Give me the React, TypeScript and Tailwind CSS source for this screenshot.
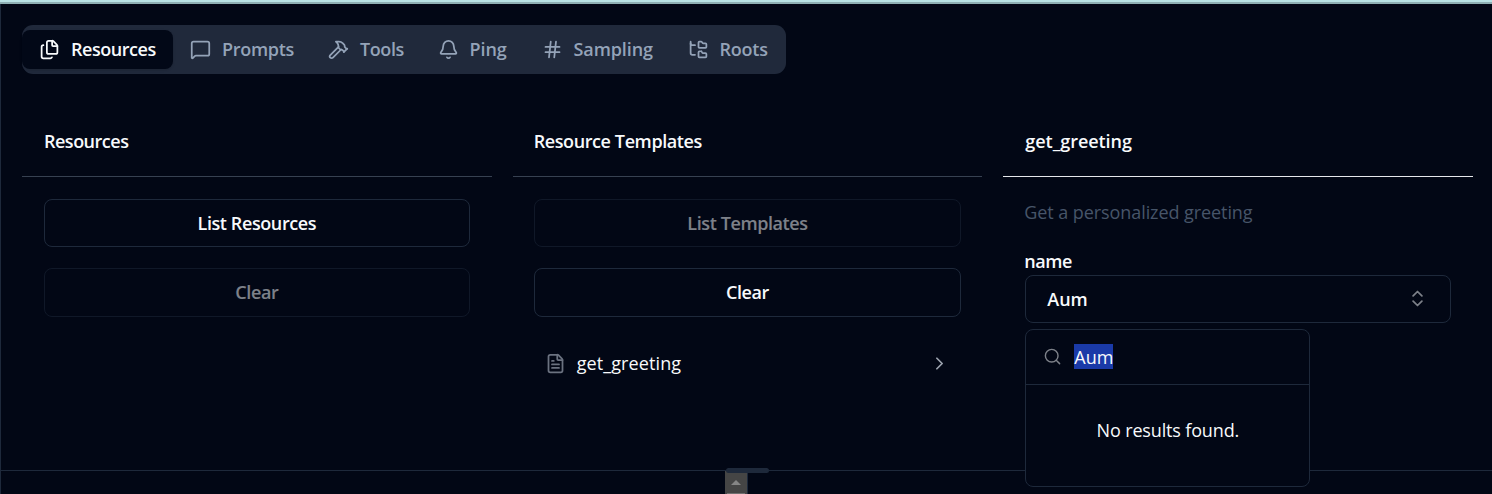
import type { ReactNode } from "react";
import {
  Bell,
  ChevronRight,
  ChevronsUpDown,
  FileText,
  Files,
  FolderTree,
  Hammer,
  Hash,
  MessageSquare,
  Search,
} from "lucide-react";

const tabs = [
  { label: "Resources", Icon: Files, box: "w-[151px] rounded-lg bg-[#020817] text-[#f8fafc] shadow-sm", text: "tracking-[-0.45px]" },
  { label: "Prompts", Icon: MessageSquare, box: "w-[138px]", text: "tracking-[-0.3px]" },
  { label: "Tools", Icon: Hammer, box: "w-[109.5px]", text: "tracking-[-0.4px]" },
  { label: "Ping", Icon: Bell, box: "w-[104px]", text: "tracking-[-0.05px]" },
  { label: "Sampling", Icon: Hash, box: "w-[146px]", text: "tracking-[-0.1px]" },
  { label: "Roots", Icon: FolderTree, box: "w-[115px]", text: "tracking-[-0.2px]" },
];

interface PanelProps {
  title: string;
  line: string;
  heading: string;
  body: string;
  children: ReactNode;
}

function Panel({ title, line, heading, body, children }: PanelProps) {
  return (
    <section className="min-w-0">
      <header className={`flex h-[72px] items-center border-b ${line} ${body}`}>
        <h3 className={`font-semibold ${heading}`}>{title}</h3>
      </header>
      <div className={`pt-[22px] ${body}`}>{children}</div>
    </section>
  );
}

function Button({ children, disabled, size = "h-12" }: { children: ReactNode; disabled?: boolean; size?: string }) {
  return (
    <button
      disabled={disabled}
      className={`flex w-full items-center justify-center rounded-lg border border-[#1e293b] font-semibold tracking-[-0.4px] disabled:opacity-50 ${size}`}
    >
      {children}
    </button>
  );
}

export default function App() {
  return (
    <div className="flex h-[494px] w-[1492px] flex-col overflow-hidden bg-[#020715] font-['Open_Sans','Noto_Sans',sans-serif] text-[18px] leading-6 text-[#f8fafc]">
      <div className="h-1 shrink-0 border-b-2 border-[#8eafb3] bg-[#b9e2e4]" />
      <div className="flex grow flex-col border-l border-[#1e293b]">
        <main className="h-[466px] shrink-0 pt-[21px] pr-[19px] pl-[21px]">
          <nav className="flex h-[49px] w-[764px] items-center rounded-[11px] bg-[#20293b] text-[#94a3b8]">
            {tabs.map(({ label, Icon, box, text }) => (
              <button key={label} className={`flex h-[39px] shrink-0 items-center pl-[17px] font-semibold ${box}`}>
                <Icon className="mr-[11px] size-[21px] shrink-0" />
                <span className={`-mt-0.5 ${text}`}>{label}</span>
              </button>
            ))}
          </nav>
          <div className="mt-[31px] grid grid-cols-3 gap-[21px]">
            <Panel title="Resources" line="border-[#374151]" heading="tracking-[-0.5px]" body="px-[22px]">
              <div className="flex flex-col gap-[21px]">
                <Button>List Resources</Button>
                <Button disabled size="h-[49px] pb-px">Clear</Button>
              </div>
            </Panel>
            <Panel title="Resource Templates" line="border-[#374151]" heading="tracking-[-0.4px]" body="px-[21px]">
              <div className="flex flex-col gap-[21px]">
                <Button disabled>List Templates</Button>
                <Button size="h-[49px] pb-px">Clear</Button>
              </div>
              <div className="mt-[34px] flex items-center px-[11px]">
                <FileText className="size-[21px] text-[#6b7280]" />
                <span className="ml-[11px] grow tracking-[0.1px]">get_greeting</span>
                <ChevronRight className="size-[21px] text-[#9ca3af]" />
              </div>
            </Panel>
            <Panel title="get_greeting" line="border-[#e5e7eb]" heading="tracking-[-0.05px]" body="px-[22px]">
              <p className="mt-[1px] -ml-px tracking-[-0.08px] text-[#475569]">Get a personalized greeting</p>
              <label className="mt-[25px] -ml-px block font-semibold tracking-[-0.5px]">name</label>
              <div className="relative mt-[2px]">
                <button className="flex h-12 w-full items-center justify-between rounded-lg border border-[#1e293b] pr-[22px] pl-[21px] font-semibold tracking-[-0.1px]">
                  Aum
                  <ChevronsUpDown className="-mt-px size-[21px] opacity-50" />
                </button>
                <div className="absolute top-[54px] left-0 z-10 flex h-[158px] w-[285px] flex-col rounded-lg border border-[#1e293b] bg-[#020715]">
                  <div className="flex h-[55px] items-center border-b border-[#1e293b] pl-[17px]">
                    <Search className="-mt-px mr-3 size-[19px] opacity-50" strokeWidth={1.8} />
                    <span className="-mt-px h-[25px] bg-[#1a3aa8] leading-[26px] tracking-[-0.05px]">Aum</span>
                  </div>
                  <div className="flex h-[90px] items-center justify-center tracking-[-0.15px]">No results found.</div>
                </div>
              </div>
            </Panel>
          </div>
        </main>
        <footer className="relative h-6 border-t border-[#1e293b]">
          <div className="absolute top-0 left-[724px] flex h-[23px] w-[23px] flex-col items-center justify-between border-r border-[#1e293b] bg-[#454545] pt-[9px]">
            <svg width="10" height="5" viewBox="0 0 10 5" fill="#858585">
              <path d="M5 0 10 5H0Z" />
            </svg>
            <div className="h-px w-[18px] bg-[#707070]" />
          </div>
          <div className="absolute top-[-3px] left-[725px] h-[5px] w-[43px] rounded-full bg-[#1e293b]" />
        </footer>
      </div>
    </div>
  );
}
